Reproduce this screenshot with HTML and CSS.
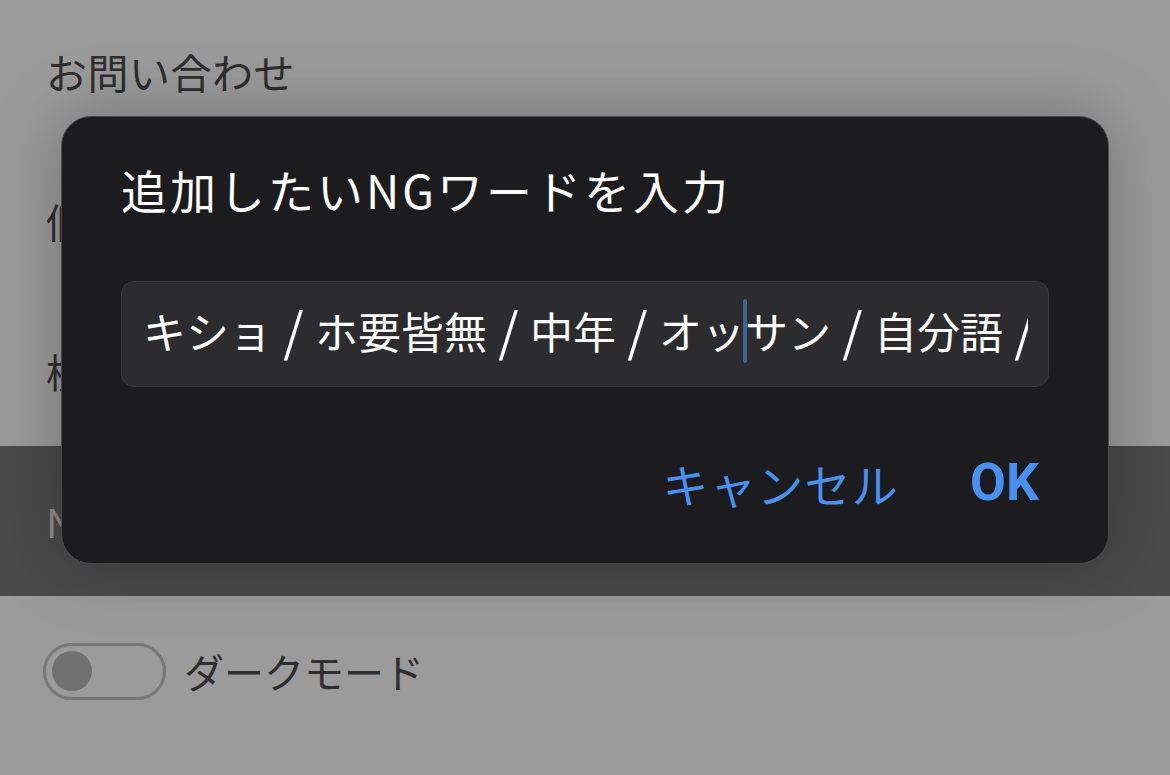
FILE: index.html
```html
<!DOCTYPE html>
<html lang="ja">
<head>
<meta charset="utf-8">
<title>設定</title>
<link rel="stylesheet" href="styles.css">
</head>
<body>
<div class="page">
  <ul class="settings">
    <li class="row"><span class="label label-wide">お問い合わせ</span></li>
    <li class="row"><span class="label">個人情報の取り扱い</span></li>
    <li class="row"><span class="label">検索履歴を削除</span></li>
    <li class="row row-active"><span class="label">NGワード設定</span></li>
    <li class="row">
      <span class="toggle"><span class="knob"></span></span>
      <span class="label">ダークモード</span>
    </li>
  </ul>

  <div class="dialog" role="dialog">
    <h2 class="dialog-title">追加したいNGワードを入力</h2>
    <div class="field">
      <span class="field-text">キショ<span class="sep">/</span>ホ要皆無<span class="sep">/</span>中年<span class="sep">/</span>オッ<span class="caret"></span>サン<span class="sep">/</span>自分語<span class="sep">/</span></span>
    </div>
    <div class="actions">
      <span class="btn btn-cancel">キャンセル</span>
      <span class="btn btn-ok">OK</span>
    </div>
  </div>
</div>
</body>
</html>
```

FILE: styles.css
```css
html, body {
  margin: 0;
  padding: 0;
}

body {
  width: 1170px;
  height: 775px;
  overflow: hidden;
  background: #9b9b9b;
  font-family: "Noto Sans CJK JP", "Noto Sans", sans-serif;
}

.page {
  position: relative;
  display: flow-root;
  width: 1170px;
  height: 775px;
}

.settings {
  list-style: none;
  margin: -4px 0 0;
  padding: 0;
}

.row {
  height: 150px;
  display: flex;
  align-items: center;
  padding-left: 46px;
  box-sizing: border-box;
  font-size: 40px;
  color: #2e2e2e;
}

.row-active {
  background: #4a4a4a;
  color: #8e8e8e;
}

.row .label {
  line-height: 1;
}

.row .label-wide {
  font-size: 41px;
  letter-spacing: 0.5px;
}

.toggle {
  width: 123px;
  height: 57px;
  box-sizing: border-box;
  border: 3px solid #787878;
  border-radius: 29px;
  margin-left: -3px;
  margin-right: 18px;
  display: flex;
  align-items: center;
  padding-left: 6px;
}

.knob {
  width: 40px;
  height: 40px;
  border-radius: 50%;
  background: #717171;
}

.dialog {
  position: absolute;
  left: 61px;
  top: 116px;
  width: 1048px;
  height: 448px;
  box-sizing: border-box;
  background: #1c1c1e;
  border: 1px solid #4a4a4c;
  border-radius: 30px;
  padding: 44px 59px 0 59px;
  box-shadow: 0 0 70px rgba(0, 0, 0, 0.28);
  display: flex;
  flex-direction: column;
}

.dialog-title {
  margin: 0;
  font-size: 46px;
  font-weight: 400;
  line-height: 56px;
  color: #ffffff;
  letter-spacing: 3px;
}

.field {
  margin-top: 64px;
  height: 106px;
  box-sizing: border-box;
  background: #2c2c2e;
  border: 1px solid #3a3a3c;
  border-radius: 13px;
  padding: 0 20px 8px 21px;
  display: flex;
  align-items: center;
}

.field-text {
  display: block;
  width: 100%;
  overflow-x: clip;
  overflow-y: visible;
  white-space: nowrap;
  font-size: 43px;
  line-height: 64px;
  color: #ffffff;
}

.sep {
  display: inline-block;
  width: 43px;
  text-align: center;
  font-size: 52px;
  line-height: 64px;
  vertical-align: top;
  position: relative;
  top: -1px;
}

.caret {
  display: inline-block;
  width: 4px;
  height: 64px;
  margin: 0 -2px;
  background: #3d6399;
  border-radius: 2px;
  vertical-align: top;
  position: relative;
  top: 1px;
}

.actions {
  margin-top: 66px;
  display: flex;
  justify-content: flex-end;
  align-items: center;
  gap: 71px;
  padding-right: 10px;
  height: 60px;
}

.btn {
  color: #4791f2;
  line-height: 60px;
}

.btn-cancel {
  font-size: 46px;
  letter-spacing: 1.3px;
}

.btn-ok {
  font-family: Roboto, "Liberation Sans", sans-serif;
  font-weight: 700;
  font-size: 52px;
}
```
